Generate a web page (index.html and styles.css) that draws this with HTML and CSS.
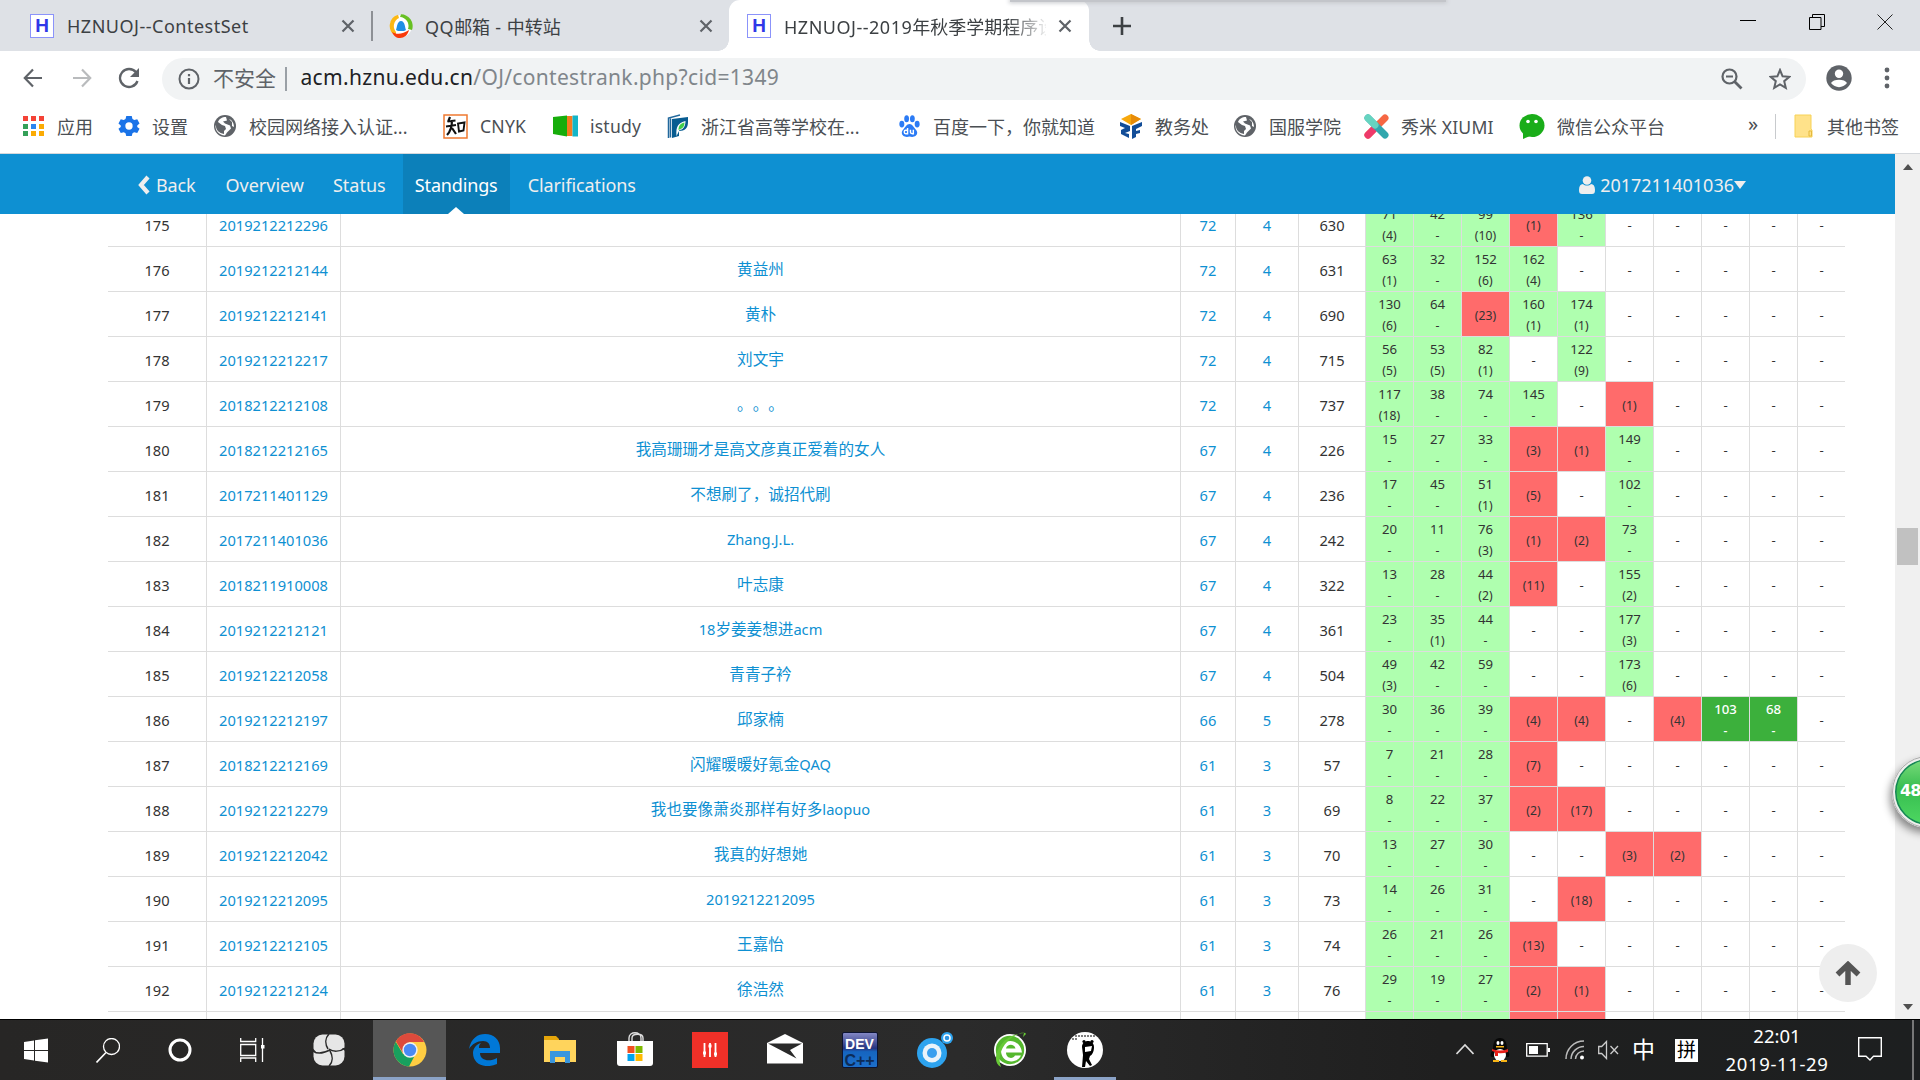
FILE: index.html
```html
<!DOCTYPE html>
<html lang="zh-CN">
<head>
<meta charset="utf-8">
<title>HZNUOJ--2019年秋季学期程序设计</title>
<link rel="stylesheet" href="styles.css">
</head>
<body>
<svg class="defs" width="0" height="0">
  <symbol id="x" viewBox="0 0 14 14"><path d="M1.5 1.5l11 11M12.5 1.5l-11 11" stroke="#5f6368" stroke-width="2.2" fill="none"/></symbol>
  <symbol id="globe" viewBox="0 0 24 24"><circle cx="12" cy="12" r="11" fill="#5f6368"/><path d="M13 3c-4 0-7 2-8 5l4 3 3 1 1 3-2 2v3c-5-1-8-4-8-8l-.5-1C2 17 6 21 12 21.500l2-3 4-4-1-3-5-2-2-2 4-1z" fill="#fff"/><path d="M16 5l3 3v4l2 1c0-4-2-7-5-8z" fill="#fff"/></symbol>
</svg>

<header class="tabs">
  <div class="tab">
    <span class="fav">H</span><span class="title"><span class="lat">HZNUOJ--ContestSet</span></span><svg class="close" width="14" height="14"><use href="#x"/></svg>
  </div>
  <div class="tab split">
    <svg class="qq" width="24" height="24" viewBox="0 0 24 24"><circle cx="12" cy="12" r="11" fill="#fff"/><path d="M7 22A11.500 11.500 0 0 1 9 .7L10 4a9 9 0 0 0-3 14z" fill="#fcb814"/><path d="M12 .3A11.800 11.800 0 0 1 23 16l-4-1A9 9 0 0 0 11 3z" fill="#67c023"/><path d="M3 18c5 3 11 2 17-2-1 5-5 8-9 8s-6-2-8-6z" fill="#f93a0c"/><path d="M7 16c1-2 1-9 5-9s4 7 5 9l-2 1H9z" fill="#1f8fe5"/></svg>
    <span class="title"><span class="lat">QQ</span>邮箱<span class="lat"> - </span>中转站</span><svg class="close" width="14" height="14"><use href="#x"/></svg>
  </div>
  <div class="tab active">
    <span class="fav">H</span><span class="title fade"><span class="lat">HZNUOJ--2019</span>年秋季学期程序设</span><svg class="close" width="14" height="14"><use href="#x"/></svg>
  </div>
  <svg class="plus" width="18" height="18" viewBox="0 0 18 18"><path d="M9 0v18M0 9h18" stroke="#3c4043" stroke-width="2.600"/></svg>
  <div class="winctl">
    <svg width="16" height="16" viewBox="0 0 16 16"><path d="M0 6.500h16" stroke="#000"/></svg>
    <svg width="16" height="16" viewBox="0 0 16 16"><path d="M.5 3.500h11.500v12H.5zM3.500 3.500v-3h12v12h-3.500" fill="none" stroke="#000"/></svg>
    <svg width="16" height="16" viewBox="0 0 16 16"><path d="M.5.5l15 15M15.500.5l-15 15" stroke="#222" fill="none"/></svg>
  </div>
  <div class="strip"></div>
</header>

<div class="toolbar">
  <svg width="20" height="20" viewBox="0 0 20 20"><path d="M19 10H2M10 1.500L1.800 10l8.200 8.500" fill="none" stroke="#5f6368" stroke-width="2.200"/></svg>
  <svg width="20" height="20" viewBox="0 0 20 20"><path d="M1 10h17M10 1.500l8.200 8.500-8.200 8.500" fill="none" stroke="#b9bbbd" stroke-width="2.200"/></svg>
  <svg width="22" height="22" viewBox="0 0 22 22"><path d="M18 5.300A9 9 0 1 0 19.500 14" fill="none" stroke="#5f6368" stroke-width="2.300"/><path d="M21 1v9h-9z" fill="#5f6368"/></svg>
  <div class="omni">
    <svg width="22" height="22" viewBox="0 0 22 22"><circle cx="11" cy="11" r="9.500" fill="none" stroke="#5f6368" stroke-width="2"/><path d="M11 10v6M11 6v2.200" stroke="#5f6368" stroke-width="2.200"/></svg>
    <span class="unsafe">不安全</span><i class="sep"></i>
    <span class="url"><b>acm.hznu.edu.cn</b>/OJ/contestrank.php?cid=1349</span>
    <svg class="zoomi" width="22" height="22" viewBox="0 0 22 22"><circle cx="8.500" cy="8.500" r="7" fill="none" stroke="#5f6368" stroke-width="2.200"/><path d="M13.500 13.500l7 7" stroke="#5f6368" stroke-width="2.800"/><path d="M5 8.500h7" stroke="#5f6368" stroke-width="2"/></svg>
    <svg width="22" height="22" viewBox="0 0 22 22"><path d="M11 2l2.600 6.300 6.700.5-5.100 4.400 1.600 6.600L11 16.300l-5.800 3.500 1.600-6.600-5.100-4.400 6.700-.5z" fill="none" stroke="#5f6368" stroke-width="2"/></svg>
  </div>
  <svg class="avatar" width="26" height="26" viewBox="0 0 26 26"><circle cx="13" cy="13" r="12.700" fill="#5f6368"/><circle cx="13" cy="8.700" r="4.200" fill="#fff"/><path d="M5 18c2-4.500 14-4.500 16 0-4 5.500-12 5.500-16 0z" fill="#fff"/></svg>
  <svg width="6" height="22" viewBox="0 0 6 22"><g fill="#5f6368"><circle cx="3" cy="3" r="2.400"/><circle cx="3" cy="11" r="2.400"/><circle cx="3" cy="19" r="2.400"/></g></svg>
</div>

<div class="marks">
  <div class="bm"><svg width="24" height="24" viewBox="0 0 24 24"><g fill="#f44336"><path d="M1 2h5v5H1zM9 2h5v5H9zM17 2h5v5h-5z"/></g><path d="M1 10h5v5H1zM1 17h5v5H1z" fill="#34a058"/><path d="M9 10h5v5H9z" fill="#2a84f0"/><path d="M17 10h5v5h-5zM9 17h5v5H9zM17 17h5v5h-5z" fill="#fbab04"/></svg>应用</div>
  <div class="bm"><svg width="22" height="22" viewBox="0 0 24 24"><path d="M9 1h6l.8 3.400 2 1.100L21 4.500l2.500 4.700L21 11.500v1.500l2.500 2-2.500 4.700-3.400-1-1.800 1.200L15 23H9l-.8-3.100-1.900-1.200-3.300 1L.5 15 3 13v-1.500L.5 9.200 3 4.500l3.300 1 1.900-1.100z" fill="#1a73e8"/><circle cx="12" cy="12" r="4" fill="#fff"/></svg>设置</div>
  <div class="bm"><svg width="24" height="24"><use href="#globe"/></svg>校园网络接入认证...</div>
  <div class="bm"><svg width="25" height="25" viewBox="0 0 25 25"><path d="M1 1h23v23H1z" fill="#fff" stroke="#f07a30" stroke-width="1.500"/><path d="M7 3L5 8M4.500 7.500l8-1M3 12.500l10-1.500M9 6c0 6-1 11-5 15M9 14l4 6" fill="none" stroke="#111" stroke-width="2.200"/><path d="M15 9.500l1 8 4.500-1 1-8z" fill="none" stroke="#111" stroke-width="1.900"/></svg><span class="lat">CNYK</span></div>
  <div class="bm"><svg width="25" height="24" viewBox="0 0 25 24"><path d="M0 3l14-1.500v21L0 20z" fill="#17ad0b"/><path d="M14 2h5.500v20H14z" fill="#f47b20"/><path d="M19.500 1.500H25v21h-5.500z" fill="#12b5c8"/></svg><span class="lat">istudy</span></div>
  <div class="bm"><svg width="22" height="25" viewBox="0 0 22 25"><path d="M1.500 24V4L13 1M3.500 4.500v19" fill="none" stroke="#22689c" stroke-width="1.500"/><path d="M5 5l16-2v5c0 6-3 9-9 9v5l-7 2z" fill="#075c91"/><path d="M9.500 22c-1-10 2-13 9-15 0 6-3 9-6 9z" fill="#fff"/><path d="M11.500 16c0-5 3-7 6-7.500 0 4-2 6-4 6.500z" fill="#3fcf4a"/></svg>浙江省高等学校在...</div>
  <div class="bm"><svg width="23" height="24" viewBox="0 0 24 24"><g fill="#2b7bf5"><ellipse cx="4" cy="10" rx="2.600" ry="3.500"/><ellipse cx="9" cy="4.500" rx="2.500" ry="3.700"/><ellipse cx="15" cy="4.500" rx="2.500" ry="3.700"/><ellipse cx="20" cy="10" rx="2.600" ry="3.500"/><path d="M12 10c3 0 4 3 6 5 5 5 0 10-6 8-6 2-11-3-6-8 2-2 3-5 6-5z"/></g><path d="M10 14v6H8c-2 0-2-3.500 0-3.500h2M13 16v2.500q0 1.500 2 1.500h1v-4" fill="none" stroke="#fff" stroke-width="1.500"/></svg>百度一下，你就知道</div>
  <div class="bm"><svg width="24" height="25" viewBox="0 0 24 25"><path d="M2 5l10-5 10 5-10 6z" fill="#f7a80c"/><path d="M12 0l10 5-10 6z" fill="#e88c08"/><path d="M1 8l10 4v5l-5 2 4 1v4L2 20v-4l4-2-5-2zM13 12l10-4v4l-6 3v2l4-1v3l-4 1v3l-4 2z" fill="#124d98"/></svg>教务处</div>
  <div class="bm"><svg width="24" height="24"><use href="#globe"/></svg>国服学院</div>
  <div class="bm"><svg width="25" height="25" viewBox="0 0 25 25"><path d="M4 21L21 4" stroke="#f66743" stroke-width="7" stroke-linecap="round"/><path d="M4 21l5-5" stroke="#ee3a6b" stroke-width="7" stroke-linecap="round"/><path d="M4 4l17 17" stroke="#31a7ad" stroke-width="7" stroke-linecap="round"/><path d="M4 4l7 7" stroke="#66d4c0" stroke-width="7" stroke-linecap="round"/></svg><span>秀米 <span class="lat">XIUMI</span></span></div>
  <div class="bm"><svg width="26" height="26" viewBox="0 0 26 26"><ellipse cx="13" cy="12.500" rx="12.500" ry="11.500" fill="#1aad19"/><path d="M4 19v7l7-3z" fill="#1aad19"/><circle cx="9" cy="8.500" r="1.800" fill="#fff"/><circle cx="17" cy="8.500" r="1.800" fill="#fff"/></svg>微信公众平台</div>
  <div class="more">»</div>
  <div class="other"><svg width="19" height="24" viewBox="0 0 19 24"><path d="M1 1h16v14l1 1v7H1z" fill="#ffe28a" stroke="#f7d256"/><path d="M15 22v-5h2.500v5z" fill="none" stroke="#e5b93c"/></svg>其他书签</div>
</div>

<main class="page">
  <div class="view">
    <nav class="nav">
      <a class="back"><svg width="12" height="20" viewBox="0 0 12 20"><path d="M10 2L3 10l7 8" fill="none" stroke="#eee" stroke-width="4.200"/></svg>Back</a>
      <a>Overview</a><a>Status</a><a class="on">Standings</a><a class="last">Clarifications</a>
      <a class="user"><svg width="16" height="18" viewBox="0 0 16 18"><circle cx="8" cy="4.500" r="4.300" fill="#eee"/><path d="M0 14c0-4 1.500-6 4-6 2 2 6 2 8 0 2.500 0 4 2 4 6 0 3-1 4-3 4H3c-2 0-3-1-3-4z" fill="#eee"/></svg>2017211401036<i class="caret"></i></a>
    </nav>
    <div class="clip">
      <table class="rank">
        <colgroup><col class="c-rank"><col class="c-id"><col class="c-name"><col class="c-score"><col class="c-solved"><col class="c-time"><col class="c-p" span="10"></colgroup>
        <tbody id="rows"></tbody>
      </table>
    </div>
  </div>
  <div class="scroll"><i class="up"></i><i class="thumb"></i><i class="down"></i></div>
  <div class="gotop"><svg width="26" height="25" viewBox="0 0 26 25"><path d="M13 24V4M2.500 13.500L13 3.500l10.500 10" fill="none" stroke="#555" stroke-width="5.500"/></svg></div>
  <div class="ball">48</div>
</main>

<footer class="taskbar">
  <div class="cell"><svg width="24" height="25" viewBox="0 0 24 25"><path d="M0 4l10-1.500V12H0zM11 2.300L24 .5V12H11zM0 13h10v9.500L0 21zM11 13h13v11.500l-13-1.800z" fill="#fff"/></svg></div>
  <div class="cell"><svg width="24" height="25" viewBox="0 0 24 25"><circle cx="15.500" cy="8.500" r="8" fill="none" stroke="#fff" stroke-width="1.300"/><path d="M10 14.500L.5 24.500" stroke="#fff" stroke-width="1.600"/></svg></div>
  <div class="cell"><svg width="24" height="24" viewBox="0 0 24 24"><circle cx="12" cy="12" r="10" fill="none" stroke="#fff" stroke-width="3"/></svg></div>
  <div class="cell"><svg width="25" height="24" viewBox="0 0 25 24"><path d="M.7 0v3.500h15V0M.7 24v-4h15v4M.7 6.500h15v11h-15zM22.500 0v24" fill="none" stroke="#fff" stroke-width="1.300"/><path d="M21 7h3.500v3.500H21z" fill="#fff"/></svg></div>
  <div class="cell wide fan"><svg width="32" height="32" viewBox="0 0 32 32"><rect x=".5" y=".5" width="31" height="31" rx="9" fill="#e6e6e6"/><path d="M16 0c-4 4-4 10-1 15M32 14c-5 4-12 4-16 1M16 32c4-4 4-10 1-15M0 17c4 3 11 2 17-1" fill="none" stroke="#2a2a2a" stroke-width="1.500"/><path d="M0 14.500L3 18H0zM32 17l-3-3h3z" fill="#2a2a2a"/></svg></div>
  <div class="cell wide cur"><svg width="34" height="34" viewBox="0 0 34 34"><circle cx="17" cy="17" r="16.500" fill="#ffcd42"/><path d="M2.700 8.700L10 21l11 3-5 9.500A16.500 16.500 0 0 1 2.700 8.700z" fill="#18a05e"/><path d="M3 8.500L10 20l6-11h15C26-2 9-3 3 8.500z" fill="#dc4a3c"/><circle cx="17" cy="17" r="7.700" fill="#f1f1f1"/><circle cx="17" cy="17" r="6.200" fill="#4a8af4"/></svg></div>
  <div class="cell wide"><svg width="31" height="32" viewBox="0 0 31 32"><path d="M0 15C2 4 9 0 16 0c9 0 15 6 15 14v5H11c0 8 10 9 17 5v6C17 35 4 31 4 19c0-5 4-9 8-10-2 2-2 3-2 5h11c0-4-2-7-7-7C8 7 3 10 0 15z" fill="#0078d7"/></svg></div>
  <div class="cell wide"><svg width="34" height="28" viewBox="0 0 34 28"><path d="M1 0h12l3 3v4H1z" fill="#e5a50a"/><path d="M1 4h32v22H1z" fill="#ffd45c"/><path d="M7 15h20v12h-5v-6h-10v6H7z" fill="#3a96dd"/></svg></div>
  <div class="cell wide"><svg class="store" width="36" height="34" viewBox="0 0 36 34"><path d="M12 9V6c0-7 12-7 12 0v3M15 9V6c0-5 11-5 11 0v3" fill="none" stroke="#ddd" stroke-width="1.400"/><path d="M0 9h36v22q0 3-3 3H3q-3 0-3-3z" fill="#fff"/><path d="M10.500 14h7v7h-7z" fill="#f25022"/><path d="M18.500 14h7v7h-7z" fill="#7fba00"/><path d="M10.500 22h7v7h-7z" fill="#00a4ef"/><path d="M18.500 22h7v7h-7z" fill="#ffb900"/></svg></div>
  <div class="cell wide"><svg width="36" height="36" viewBox="0 0 36 36"><path d="M0 0h36v36H0z" fill="#f03028"/><path d="M12.500 11v14M18 11v14M23.500 11v14" stroke="#fff" stroke-width="1.800"/><path d="M11 21h3M16.500 14h3M22 22h3" stroke="#fff" stroke-width="3"/></svg></div>
  <div class="cell wide"><svg class="mail" width="36" height="30" viewBox="0 0 36 30"><path d="M0 9L18 0l18 9v20.500H0z" fill="#fff"/><path d="M1 9.500h34l-12 6.500 6.500 8.500z" fill="#2a2a2a"/></svg></div>
  <div class="cell wide"><div class="dev"><span>DEV</span><span class="cpp">C++</span></div></div>
  <div class="cell wide"><svg width="36" height="36" viewBox="0 0 36 36"><circle cx="15" cy="21" r="15" fill="#2da3ef"/><circle cx="15" cy="21" r="9.500" fill="#eaf3fa"/><circle cx="15" cy="21" r="5" fill="#3a9fee"/><circle cx="30" cy="6" r="6" fill="#2da3ef"/><circle cx="30" cy="6" r="3.800" fill="#fff"/><circle cx="30" cy="6" r="2.300" fill="#2d94e2"/></svg></div>
  <div class="cell wide"><svg width="34" height="36" viewBox="0 0 34 36"><circle cx="17" cy="18" r="16" fill="#fff"/><circle cx="17" cy="18" r="14.200" fill="#55b82e"/><path d="M29 20.500H13c0 6 7 7 9 3h6c-4 9-20 8-20-5s19-13 21 2zM13 16.500h9.500c-1-5-8.500-5-9.500 0z" fill="#fff"/><path d="M8 35C-4 30 6 2 31 1l-1 4 3-3c-1-2-6-1-8 0C12 8 3 22 8 35z" fill="#67c936"/></svg></div>
  <div class="cell wide open"><svg width="36" height="36" viewBox="0 0 36 36"><circle cx="18" cy="18" r="18" fill="#fff"/><path d="M8 4h20M5 7h6" stroke="#555" stroke-dasharray="2 1" stroke-width="1.500"/><circle cx="17" cy="9.500" r="1.600"/><circle cx="25" cy="9.500" r="1.600"/><path d="M15 15c0-8 12-8 12 0 0 5-2 8-4 9l-1 3 3 6-2 1-4-5-1 6h-3l1-12z"/><path d="M18 15l7-1-1 5-6 1z" fill="#fff"/></svg></div>
  <div class="tray">
    <svg width="18" height="24" viewBox="0 0 18 24"><path d="M.5 16L9 7l8.500 9" fill="none" stroke="#ddd" stroke-width="1.600"/></svg>
    <svg width="20" height="24" viewBox="0 0 20 24"><path d="M3 12C3 4 5 0 10 0s7 4 7 12c3 3 3 7 1 7H2c-2 0-2-4 1-7z" fill="#080808"/><ellipse cx="10" cy="17" rx="6" ry="6" fill="#fff"/><ellipse cx="8" cy="5" rx="1.500" ry="2" fill="#fff"/><ellipse cx="12" cy="5" rx="1.500" ry="2" fill="#fff"/><path d="M6 8h8v1.500H6zM3 22h6v2H3zM11 22h6v2h-6z" fill="#f8b416"/><path d="M2 11q8 3 16 0v3q-6 2-10 1v3H5v-4l-3-1z" fill="#e71f19"/></svg>
    <svg width="24" height="16" viewBox="0 0 24 16"><path d="M.7 1.700h20.500v12.500H.7z" fill="none" stroke="#fff" stroke-width="1.300"/><path d="M3 4h9v8H3zM22 6h2v4h-2z" fill="#fff"/></svg>
    <svg width="20" height="20" viewBox="0 0 20 20"><path d="M1 19A18 18 0 0 1 19 1M6 19A13 13 0 0 1 19 6.500M10.500 19a8.500 8.500 0 0 1 8.500-8" fill="none" stroke="#bbb" stroke-width="1.500"/><circle cx="17" cy="17.500" r="2" fill="#fff"/></svg>
    <svg width="21" height="20" viewBox="0 0 21 20"><path d="M.7 6.500h3L8.500 1.500v17l-4.800-5h-3zM12.500 6l7.500 8M20 6l-7.500 8" fill="none" stroke="#ccc" stroke-width="1.300"/></svg>
    <span class="zh">中</span><span class="pin">拼</span>
    <div class="clock"><span>22:01</span><span class="date">2019-11-29</span></div>
    <svg width="24" height="26" viewBox="0 0 24 26"><path d="M.7.7h22.600v18.600h-7.800L12 23l-4-3.700H.7z" fill="none" stroke="#fff" stroke-width="1.400"/></svg>
    <i class="desk"></i>
  </div>
</footer>
<script src="standings.js"></script>
</body>
</html>
```
FILE: styles.css
```css
* { box-sizing: border-box; }
body { margin: 0; width: 1920px; height: 1080px; overflow: hidden; background: #fff; display: flex; flex-direction: column; font-family: "Noto Sans", "Noto Sans CJK SC", sans-serif; color: #333; position: relative; }
svg { display: block; flex: none; }
.defs { position: absolute; }
i { font-style: normal; }

.tabs { height: 51px; flex: none; background: #dee1e6; display: flex; align-items: center; position: relative; }
.tab { height: 51px; display: flex; align-items: center; width: 359px; padding-left: 18px; padding-right: 17px; white-space: nowrap; }
.tab:first-child { width: 371px; padding-left: 30px; padding-right: 16px; }
.tab.split { width: 358px; padding-right: 16px; position: relative; }
.tab.split::before { content: ""; width: 1.500px; height: 30px; background: #8d9095; position: absolute; left: 0; top: 11px; }
.tab.active { width: 360px; background: #fff; border-radius: 11px 11px 0 0; position: relative; }
.tab.active::before, .tab.active::after { content: ""; position: absolute; bottom: 0; width: 11px; height: 11px; }
.tab.active::before { left: -11px; background: radial-gradient(circle at 0 0, transparent 10.500px, #fff 11px); }
.tab.active::after { right: -11px; background: radial-gradient(circle at 100% 0, transparent 10.500px, #fff 11px); }
.fav { width: 24px; height: 24px; border: 1px solid #8b93fa; background: #fff; color: #3038e8; font: bold 19px/21px "Liberation Sans", sans-serif; text-align: center; flex: none; margin-right: 13px; }
.qq { margin-right: 12px; }
.title { flex: 1; min-width: 0; font-size: 18px; color: #3c4043; overflow: hidden; }
.title .lat { letter-spacing: .5px; }
.fade { margin-right: 12px; -webkit-mask-image: linear-gradient(90deg, #000 225px, transparent 265px); mask-image: linear-gradient(90deg, #000 225px, transparent 265px); }
.plus { margin-left: 24px; }
.winctl { margin-left: auto; display: flex; gap: 52.500px; padding-right: 27px; margin-bottom: 8px; }
.strip { position: absolute; left: 1010px; top: 0; width: 436px; height: 2px; background: #c3c5ca; box-shadow: 0 0 4px 1px #c3c5ca; }

.toolbar { height: 54px; flex: none; display: flex; align-items: center; padding: 1px 28px 0 23px; }
.toolbar > svg { margin-bottom: 2px; }
.toolbar > svg:nth-child(2) { margin-left: 29px; }
.toolbar > svg:nth-child(3) { margin-left: 26px; }
.omni { width: 1644px; height: 42px; margin-left: 22px; border-radius: 21px; background: #f1f3f4; display: flex; align-items: center; padding: 0 15px 0 16px; }
.unsafe { font-size: 21px; line-height: 40px; color: #5f6368; margin: 0 0 2px 13px; }
.sep { width: 1.500px; height: 24px; background: #9aa0a6; margin: 0 14px 0 9px; }
.url { flex: 1; font-size: 21px; letter-spacing: .32px; line-height: 38px; margin-bottom: 4px; color: #80868b; white-space: nowrap; }
.url b { font-weight: 400; color: #202124; }
.zoomi { margin-right: 26px; }
.avatar { margin-left: 20px; margin-right: 32px; }

.marks { height: 49px; flex: none; border-bottom: 1px solid #d5d8dc; display: grid; grid-template-columns: 96px 95px 230px 110px 114px 231px 221px 114px 131px 155px 229px 27px 1fr; padding-left: 22px; padding-bottom: 6px; align-items: center; font-size: 18px; color: #4b4f54; white-space: nowrap; }
.bm { display: flex; align-items: center; gap: 12px; }
.bm:first-child { gap: 11px; }
.marks .lat { font-size: 17.600px; letter-spacing: .2px; }
.more { font-size: 20px; line-height: 20px; padding-bottom: 4px; }
.other { display: flex; align-items: center; gap: 14px; height: 25px; padding-left: 18px; border-left: 1px solid #c8cacd; }

.page { height: 865px; flex: none; display: flex; position: relative; }
.view { width: 1895px; display: flex; flex-direction: column; }
.nav { height: 60px; flex: none; background: #0e90d2; display: flex; padding: 0 137px 0 126px; font-size: 18px; }
.nav a { color: #eee; display: flex; align-items: center; padding: 2px 12px 0; height: 60px; margin-right: 5px; position: relative; }
.nav .back { gap: 6px; letter-spacing: -.15px; margin-right: 6px; }
.nav .on { background: #0c80ba; color: #fff; width: 107px; padding: 2px 0 0; justify-content: center; letter-spacing: -.15px; }
.nav .last { letter-spacing: -.1px; padding-left: 13px; }
.nav .on::after { content: ""; position: absolute; left: 50%; bottom: 0; margin-left: -8px; border: 8px solid transparent; border-top: 0; border-bottom: 7px solid #fff; }
.nav .user { margin: 0 0 0 auto; gap: 5px; }
.caret { border: 6.500px solid transparent; border-bottom: 0; border-top: 8px solid #eee; margin-left: -5px; }
.clip { height: 805px; overflow: hidden; }
.rank { table-layout: fixed; width: 1737px; margin: -13px 0 0 108px; border-collapse: separate; border-spacing: 0; font-size: 14.670px; text-align: center; }
.c-rank { width: 98px; } .c-id { width: 134px; } .c-name { width: 840px; } .c-score { width: 55px; } .c-solved { width: 63px; } .c-time { width: 67px; } .c-p { width: 48px; }
.rank td { height: 45px; padding: 1px 0 0; border-top: 1px solid #ddd; border-left: 1px solid #ddd; line-height: 22px; vertical-align: middle; white-space: nowrap; overflow: hidden; }
.rank td:first-child { border-left: 0; }
.rank td.link { color: #0e90d2; }
.rank td.name { font-size: 15.600px; padding: 0; text-spacing-trim: space-all; }
.name span { font-size: 14.670px; }
.rank td.p { font-size: 13.200px; padding: 0; }
.rank td.p.none { padding-top: 1px; }
.rank td.ok, .rank td.first { line-height: 21px; }
.rank td.p.ok, .rank td.p.first { padding-top: 2px; }
.rank small { font-size: 12.200px; display: block; }
.ok { background: #afffaf; }
.rank td.p.bad { background: #ff6b6b; font-size: 12.200px; padding-top: 4px; }
.rank td.first { background: #3cb03c; color: #fff; font-weight: 500; }

.scroll { width: 25px; background: #f0f0f0; position: relative; display: flex; flex-direction: column; align-items: center; }
.up { border: 5.500px solid transparent; border-top: 0; border-bottom: 6px solid #505050; margin-top: 10px; }
.thumb { width: 21px; height: 37px; background: #c1c1c1; margin-top: 358px; }
.down { border: 5.500px solid transparent; border-bottom: 0; border-top: 6px solid #505050; margin-top: auto; margin-bottom: 9px; }
.gotop { position: absolute; left: 1819px; top: 790px; width: 58px; height: 58px; border-radius: 50%; background: #eee; display: flex; align-items: center; justify-content: center; }
.ball { position: absolute; left: 1892px; top: 602px; width: 72px; height: 72px; border-radius: 50%; border: 3px solid #eee; outline: 1px solid #a9a9a9; outline-offset: -1px; background: linear-gradient(#7bdc7b, #37bd50 45%, #4ed862); box-shadow: inset 0 0 0 1.500px #168458, -2px 5px 9px rgba(0,0,0,.45); clip-path: inset(-20px 44px -20px -20px); color: #fff; font: bold 16px/64px "DejaVu Sans", sans-serif; padding-left: 5px; white-space: nowrap; letter-spacing: -1px; }

.taskbar { height: 61px; flex: none; background: linear-gradient(90deg, #272625, #2b2b2b 50%, #1f1f1f 75%, #1d1f20); border-top: 1px solid #000; display: flex; }
.cell { width: 72px; flex: none; display: flex; align-items: center; justify-content: center; }
.cell.wide { width: 75px; }
.cell.fan { width: 79px; margin-left: 1px; }
.cell.cur { background: #565656; border-bottom: 3px solid #8ba3c7; padding-top: 3px; width: 73px; margin-left: 5px; margin-right: 1px; }
.cell.open { background: linear-gradient(#8ba3c7, #8ba3c7) 50% 100% / 62px 3px no-repeat; }
.mail { margin-top: -3px; }
.store { margin-top: -2px; }
.dev { width: 36px; height: 36px; border: 1px solid #0c1433; border-radius: 2px; background: linear-gradient(#8388c5, #26337f 45%, #1565c0 55%, #1d6fca); color: #fff; display: flex; flex-direction: column; align-items: center; font: bold 14px/18px "Liberation Sans", sans-serif; padding-top: 2px; }
.dev .cpp { font-size: 16px; line-height: 15px; color: #0d2c58; }
.tray { margin-left: auto; width: 464px; display: grid; grid-template-columns: 34px 36px 39px 33px 34px 43px 42px 141px 54px 2px; align-items: center; }
.zh { color: #fff; font-size: 23px; line-height: 24px; margin-top: -2px; }
.pin { width: 23px; height: 23px; background: #fff; color: #000; font-size: 19px; line-height: 22px; text-align: center; }
.clock { display: flex; flex-direction: column; align-items: center; padding-right: 21px; color: #fff; font-size: 18.500px; line-height: 28px; width: 141px; }
.date { letter-spacing: .65px; }
.desk { height: 60px; width: 2px; background: #777; }
```
FILE: standings.js
```js
// rank | id | nick | score | solved | time | cells
// cell: "-" untouched, "(n)" rejected, "t" or "t(n)" accepted, "!t" first to solve
const data = `
175|2019212212296||72|4|630|71(4) 42 99(10) (1) 136 - - - - -
176|2019212212144|黄益州|72|4|631|63(1) 32 152(6) 162(4) - - - - - -
177|2019212212141|黄朴|72|4|690|130(6) 64 (23) 160(1) 174(1) - - - - -
178|2019212212217|刘文宇|72|4|715|56(5) 53(5) 82(1) - 122(9) - - - - -
179|2018212212108|。。。|72|4|737|117(18) 38 74 145 - (1) - - - -
180|2018212212165|我高珊珊才是高文彦真正爱着的女人|67|4|226|15 27 33 (3) (1) 149 - - - -
181|2017211401129|不想刷了，诚招代刷|67|4|236|17 45 51(1) (5) - 102 - - - -
182|2017211401036|Zhang.J.L.|67|4|242|20 11 76(3) (1) (2) 73 - - - -
183|2018211910008|叶志康|67|4|322|13 28 44(2) (11) - 155(2) - - - -
184|2019212212121|18岁姜姜想进acm|67|4|361|23 35(1) 44 - - 177(3) - - - -
185|2019212212058|青青子衿|67|4|504|49(3) 42 59 - - 173(6) - - - -
186|2019212212197|邱家楠|66|5|278|30 36 39 (4) (4) - (4) !103 !68 -
187|2018212212169|闪耀暖暖好氪金QAQ|61|3|57|7 21 28 (7) - - - - - -
188|2019212212279|我也要像萧炎那样有好多laopuo|61|3|69|8 22 37 (2) (17) - - - - -
189|2019212212042|我真的好想她|61|3|70|13 27 30 - - (3) (2) - - -
190|2019212212095|2019212212095|61|3|73|14 26 31 - (18) - - - - -
191|2019212212105|王嘉怡|61|3|74|26 21 26 (13) - - - - - -
192|2019212212124|徐浩然|61|3|76|29 19 27 (2) (1) - - - - -
193||||||+ + + x x - - - - -`;

function cell(c) {
  if (c === '-') return '<td class="p none">-</td>';
  if (c === '+') return '<td class="p ok"></td>';
  if (c === 'x') return '<td class="p bad"></td>';
  if (c[0] === '(') return `<td class="p bad">${c}</td>`;
  const m = c.match(/^(!?)(\d+)(\(\d+\))?$/);
  return `<td class="p ${m[1] ? 'first' : 'ok'}">${m[2]}<small>${m[3] || '-'}</small></td>`;
}

document.getElementById('rows').innerHTML = data.trim().split('\n').map(line => {
  const [rank, id, nick, score, solved, time, cells] = line.split('|');
  const name = nick.replace(/[\w.]+/g, '<span>$&</span>');
  return `<tr><td>${rank}</td><td class="link">${id}</td><td class="link name">${name}</td>` +
    `<td class="link">${score}</td><td class="link">${solved}</td><td>${time}</td>` +
    cells.split(' ').map(cell).join('') + '</tr>';
}).join('');
```
